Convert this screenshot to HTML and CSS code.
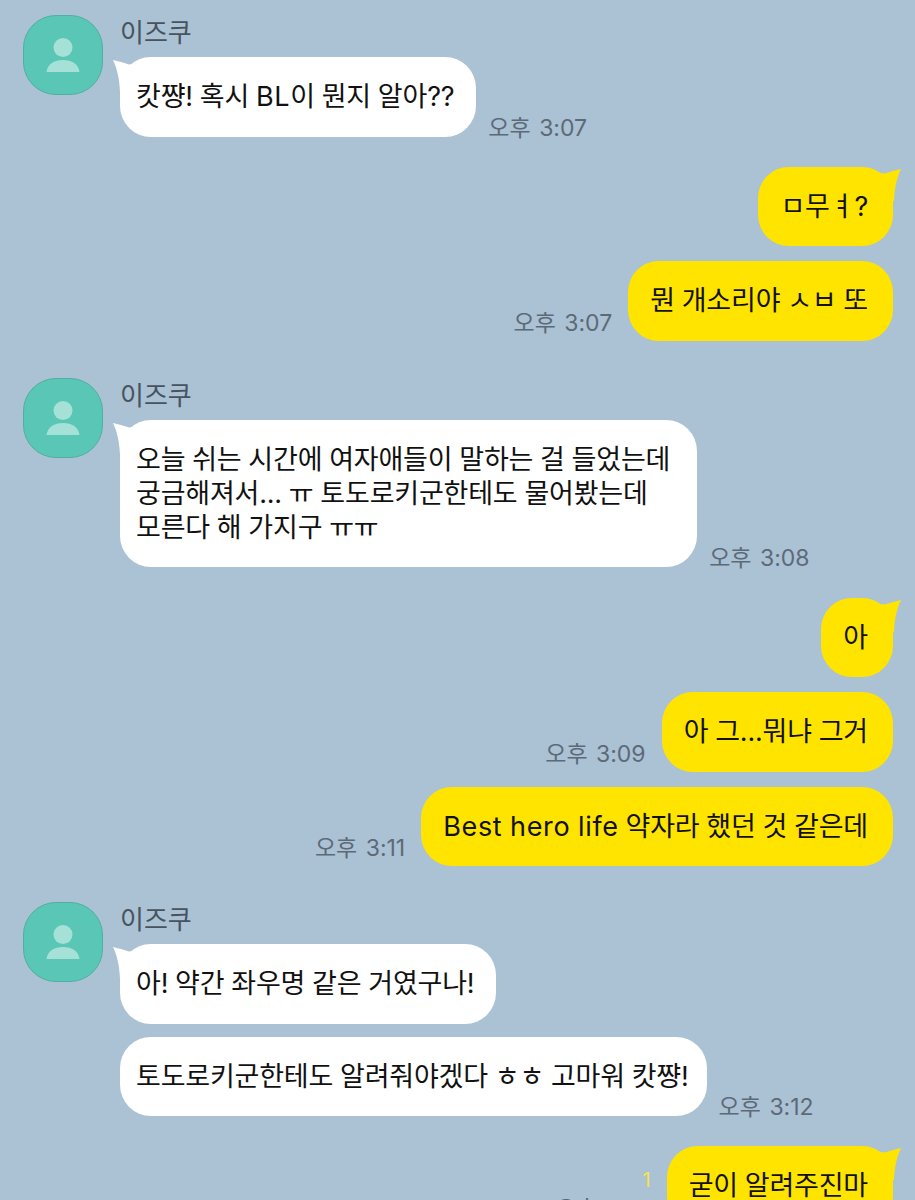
FILE: index.html
```html
<!DOCTYPE html>
<html>
    <head>
        <meta charset="utf-8" />
        <title>대화</title>
        <link rel="stylesheet" href="styles.css">
    </head>

    <body>
        <div class="chat">
            <div class="group group-first">
                <div class="avatar">
                    <svg viewBox="0 0 34 34" width="34" height="34">
                        <circle cx="17" cy="9.5" r="9.5" fill="#a5e1d6" />
                        <path d="M0.5 34 C1.5 26 8 22 17 22 C26 22 32.5 26 33.5 34 Z" fill="#a5e1d6" />
                    </svg>
                </div>
                <div class="messages">
                    <div class="name">이즈쿠</div>
                    <div class="row">
                        <div class="bubble white">
                            <svg class="tail-left" viewBox="0 0 20 32" width="20" height="32"><path d="M0 0 C5 1 11 3 16 4.5 L20 4 L20 32 L7 32 C6.5 19 4 8 0 0 Z" fill="#fff" /></svg>
                            캇쨩! 혹시 <span class="latin">BL</span>이 뭔지 알아??
                        </div>
                        <span class="time">오후 3:07</span>
                    </div>
                </div>
            </div>

            <div class="mine mine-first">
                <div class="row row-end">
                    <div class="bubble yellow">
                        <svg class="tail-right" viewBox="0 0 20 32" width="20" height="32"><path d="M20 0 C15 1 9 3 4 4.5 L0 4 L0 32 L13 32 C13.5 19 16 8 20 0 Z" fill="#ffe400" /></svg>
                        ㅁ무ㅕ?
                    </div>
                </div>
                <div class="row row-end">
                    <span class="time">오후 3:07</span>
                    <div class="bubble yellow">뭔 개소리야 ㅅㅂ 또</div>
                </div>
            </div>

            <div class="group">
                <div class="avatar">
                    <svg viewBox="0 0 34 34" width="34" height="34">
                        <circle cx="17" cy="9.5" r="9.5" fill="#a5e1d6" />
                        <path d="M0.5 34 C1.5 26 8 22 17 22 C26 22 32.5 26 33.5 34 Z" fill="#a5e1d6" />
                    </svg>
                </div>
                <div class="messages">
                    <div class="name">이즈쿠</div>
                    <div class="row">
                        <div class="bubble white bubble-wide">
                            <svg class="tail-left" viewBox="0 0 20 32" width="20" height="32"><path d="M0 0 C5 1 11 3 16 4.5 L20 4 L20 32 L7 32 C6.5 19 4 8 0 0 Z" fill="#fff" /></svg>
                            오늘 쉬는 시간에 여자애들이 말하는 걸 들었는데<br>궁금해져서... ㅠ 토도로키군한테도 물어봤는데<br>모른다 해 가지구 ㅠㅠ
                        </div>
                        <span class="time">오후 3:08</span>
                    </div>
                </div>
            </div>

            <div class="mine">
                <div class="row row-end">
                    <div class="bubble yellow">
                        <svg class="tail-right" viewBox="0 0 20 32" width="20" height="32"><path d="M20 0 C15 1 9 3 4 4.5 L0 4 L0 32 L13 32 C13.5 19 16 8 20 0 Z" fill="#ffe400" /></svg>
                        아
                    </div>
                </div>
                <div class="row row-end">
                    <span class="time">오후 3:09</span>
                    <div class="bubble yellow">아 그...뭐냐 그거</div>
                </div>
                <div class="row row-end">
                    <span class="time">오후 3:11</span>
                    <div class="bubble yellow"><span class="latin">Best hero life</span> 약자라 했던 것 같은데</div>
                </div>
            </div>

            <div class="group">
                <div class="avatar">
                    <svg viewBox="0 0 34 34" width="34" height="34">
                        <circle cx="17" cy="9.5" r="9.5" fill="#a5e1d6" />
                        <path d="M0.5 34 C1.5 26 8 22 17 22 C26 22 32.5 26 33.5 34 Z" fill="#a5e1d6" />
                    </svg>
                </div>
                <div class="messages">
                    <div class="name">이즈쿠</div>
                    <div class="row">
                        <div class="bubble white">
                            <svg class="tail-left" viewBox="0 0 20 32" width="20" height="32"><path d="M0 0 C5 1 11 3 16 4.5 L20 4 L20 32 L7 32 C6.5 19 4 8 0 0 Z" fill="#fff" /></svg>
                            아! 약간 좌우명 같은 거였구나!
                        </div>
                    </div>
                    <div class="row">
                        <div class="bubble white bubble-tight">토도로키군한테도 알려줘야겠다 ㅎㅎ 고마워 캇쨩!</div>
                        <span class="time">오후 3:12</span>
                    </div>
                </div>
            </div>

            <div class="mine mine-last">
                <div class="row row-end">
                    <div class="meta">
                        <span class="unread">1</span>
                        <span class="time">오후 3:13</span>
                    </div>
                    <div class="bubble yellow">
                        <svg class="tail-right" viewBox="0 0 20 32" width="20" height="32"><path d="M20 0 C15 1 9 3 4 4.5 L0 4 L0 32 L13 32 C13.5 19 16 8 20 0 Z" fill="#ffe400" /></svg>
                        굳이 알려주진마
                    </div>
                </div>
            </div>
        </div>
    </body>
</html>
```

FILE: styles.css
```css
html,
body {
    margin: 0;
    padding: 0;
    height: 1200px;
    overflow: hidden;
    background: #abc1d4;
    font-family: 'Inter', 'Noto Sans CJK KR', sans-serif;
    color: #111;
}

.chat {
    display: flex;
    flex-direction: column;
    padding: 15px 22px 0 23px;
}

.group {
    display: flex;
    margin-top: 36px;
}

.group-first {
    margin-top: 0;
}

.avatar {
    flex: none;
    box-sizing: border-box;
    width: 80px;
    height: 80px;
    margin-right: 17px;
    padding-top: 22px;
    border: 1px solid #4fb0a2;
    border-radius: 33px;
    background: #5ac6b6;
    display: flex;
    justify-content: center;
}

.messages {
    display: flex;
    flex-direction: column;
    gap: 13px;
}

.name {
    height: 29px;
    font-size: 26px;
    line-height: 36px;
    word-spacing: 5px;
    color: #47535e;
}

.row {
    display: flex;
    align-items: flex-end;
    gap: 12px;
}

.row-end {
    justify-content: flex-end;
    gap: 16px;
}

.bubble {
    position: relative;
    box-sizing: border-box;
    min-height: 79.5px;
    padding: 23px 22px 22px 16px;
    border-radius: 31px;
    font-size: 27px;
    line-height: 34px;
    word-spacing: -0.5px;
    letter-spacing: -0.2px;
}

.latin {
    letter-spacing: 0.65px;
}

.white {
    background: #fff;
}

.yellow {
    background: #ffe400;
    padding: 23px 25px 22px 22px;
}

.bubble-wide {
    padding-right: 27px;
}

.bubble-tight {
    padding-right: 18px;
}

.tail-left {
    position: absolute;
    left: -7px;
    top: 3px;
}

.tail-right {
    position: absolute;
    right: -8px;
    top: 2px;
}

.time {
    display: block;
    font-size: 23px;
    line-height: 24px;
    word-spacing: 2px;
    color: #5c6a78;
    margin-bottom: -3px;
    white-space: nowrap;
}

.row-end > .time {
    margin-bottom: 6px;
}

.mine {
    display: flex;
    flex-direction: column;
    gap: 15px;
    margin-top: 31px;
}

.mine-first {
    margin-top: 30px;
    margin-bottom: 1px;
}

.mine-last {
    margin-top: 30px;
}

.unread {
    display: block;
    font-size: 20px;
    line-height: 24px;
    text-align: right;
    color: #f7e34b;
}

.meta {
    align-self: flex-start;
    margin-top: 22px;
}

.meta .time {
    margin-top: 5px;
}
```
